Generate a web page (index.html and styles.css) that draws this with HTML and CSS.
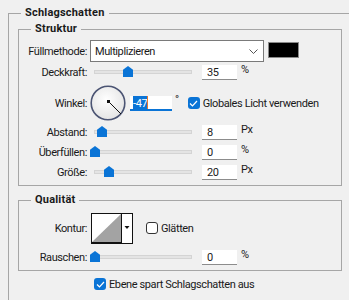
FILE: index.html
```html
<!DOCTYPE html>
<html lang="de">
<head>
    <meta charset="UTF-8">
    <title>Schlagschatten</title>
    <link rel="stylesheet" href="styles.css">
</head>
<body>
    <div class="panel">
        <div class="panel-title">Schlagschatten</div>

        <!-- Struktur -->
        <div class="group group-struct">
            <div class="group-title">Struktur</div>

            <div class="row row-blend">
                <span class="lbl">Füllmethode:</span>
                <div class="select">
                    <span>Multiplizieren</span>
                    <svg class="chevron" width="9" height="5" viewBox="0 0 9 5"><polyline points="0.5,0.5 4.5,4.5 8.5,0.5" fill="none" stroke="#555" stroke-width="1"/></svg>
                </div>
                <div class="swatch"></div>
            </div>

            <div class="row row-opacity">
                <span class="lbl">Deckkraft:</span>
                <div class="slider"><span class="thumb" style="left:28px"></span></div>
                <div class="field">35</div>
                <span class="unit">%</span>
            </div>

            <div class="row row-angle">
                <span class="lbl">Winkel:</span>
                <svg class="dial" width="36" height="36" viewBox="0 0 36 36">
                    <defs>
                        <radialGradient id="dialFill" cx="45%" cy="40%" r="60%">
                            <stop offset="0" stop-color="#ffffff"/>
                            <stop offset="1" stop-color="#e4e4e4"/>
                        </radialGradient>
                    </defs>
                    <circle cx="18" cy="18" r="16.8" fill="url(#dialFill)" stroke="#4b5473" stroke-width="1.6"/>
                    <line x1="18.5" y1="16.5" x2="31" y2="29" stroke="#111" stroke-width="1"/>
                    <rect x="17" y="15" width="3" height="3" fill="#111"/>
                </svg>
                <div class="field field-angle"><span class="sel">-47</span><span class="caret"></span></div>
                <span class="deg">°</span>
                <span class="check checked"><svg width="9" height="7" viewBox="0 0 9 7"><polyline points="1,3.5 3.5,6 8,1" fill="none" stroke="#fff" stroke-width="1.2"/></svg></span>
                <span class="check-text">Globales Licht verwenden</span>
            </div>

            <div class="row">
                <span class="lbl">Abstand:</span>
                <div class="slider"><span class="thumb" style="left:2px"></span></div>
                <div class="field">8</div>
                <span class="unit">Px</span>
            </div>

            <div class="row">
                <span class="lbl">Überfüllen:</span>
                <div class="slider"><span class="thumb" style="left:-5px"></span></div>
                <div class="field">0</div>
                <span class="unit">%</span>
            </div>

            <div class="row">
                <span class="lbl">Größe:</span>
                <div class="slider"><span class="thumb" style="left:9px"></span></div>
                <div class="field">20</div>
                <span class="unit">Px</span>
            </div>
        </div>

        <!-- Qualitaet -->
        <div class="group group-quality">
            <div class="group-title">Qualität</div>

            <div class="row row-contour">
                <span class="lbl">Kontur:</span>
                <svg class="contour" width="42" height="31" viewBox="0 0 42 31">
                    <rect x="0.5" y="0.5" width="41" height="30" fill="#fff" stroke="#111"/>
                    <polygon points="1,29 30,1 30,29" fill="#a3a3a3"/>
                    <line x1="0" y1="29.5" x2="31" y2="29.5" stroke="#111"/>
                    <line x1="30.5" y1="0" x2="30.5" y2="31" stroke="#111"/>
                    <polygon points="33.5,13 38.5,13 36,16" fill="#111"/>
                </svg>
                <span class="check check-smooth"></span>
                <span class="check-text">Glätten</span>
            </div>

            <div class="row row-noise">
                <span class="lbl">Rauschen:</span>
                <div class="slider"><span class="thumb" style="left:-5px"></span></div>
                <div class="field">0</div>
                <span class="unit">%</span>
            </div>
        </div>

        <div class="row row-knockout">
            <span class="check checked"><svg width="9" height="7" viewBox="0 0 9 7"><polyline points="1,3.5 3.5,6 8,1" fill="none" stroke="#fff" stroke-width="1.2"/></svg></span>
            <span class="check-text">Ebene spart Schlagschatten aus</span>
        </div>
    </div>
</body>
</html>
```

FILE: styles.css
```css
body {
    margin: 0;
    width: 349px;
    height: 300px;
    overflow: hidden;
    background-color: #f0f0f0;
    font-family: Roboto, "Noto Sans", sans-serif;
    font-size: 11px;
    letter-spacing: -0.4px;
    color: #1a1a1a;
}
.panel {
    margin: 13px 0 0 8px;
    width: 400px;
    padding: 0 0 20px 9px;
    border-top: 1px solid #a6a6a6;
    border-left: 1px solid #a6a6a6;
}
.panel-title, .group-title {
    font-weight: bold;
    letter-spacing: 0.2px;
    height: 16px;
    line-height: 16px;
    margin-top: -9px;
    padding: 0 4px;
    width: fit-content;
    background-color: #f0f0f0;
}
.panel-title {
    margin-left: 3px;
}
.group {
    width: 324px;
    box-sizing: border-box;
    border: 1px solid #a6a6a6;
    padding-bottom: 3px;
}
.group-title {
    margin-left: 12px;
}
.group-struct {
    margin-top: 8px;
}
.group-quality {
    margin-top: 14px;
}
.row {
    display: flex;
    align-items: center;
    height: 20px;
}
.lbl {
    flex: none;
    width: 68px;
    margin-right: 3px;
    text-align: right;
    white-space: nowrap;
}
.row-blend {
    height: 22px;
    margin-top: 3px;
}
.select {
    width: 174px;
    height: 22px;
    box-sizing: border-box;
    border: 1px solid #7a7a7a;
    background-color: #fff;
    display: flex;
    align-items: center;
    justify-content: space-between;
    padding: 0 5px 0 4px;
}
.swatch {
    align-self: flex-start;
    margin: 2px 0 0 4px;
    width: 31px;
    height: 16px;
    box-sizing: border-box;
    background-color: #000;
    border: 1px solid #8a8a8a;
}
.slider {
    position: relative;
    width: 98px;
    height: 4px;
    box-sizing: border-box;
    margin: 0 10px 0 4px;
    border: 1px solid #d4d4d4;
    background-color: #e4e4e4;
}
.thumb {
    position: absolute;
    top: -5px;
    width: 10px;
    height: 11px;
    background-color: #0a74d6;
    clip-path: polygon(50% 0, 100% 35%, 100% 100%, 0 100%, 0 35%);
}
.field {
    width: 35px;
    height: 15px;
    line-height: 15px;
    box-sizing: border-box;
    padding-left: 5px;
    background-color: #fff;
    border-bottom: 1px solid #8c8c8c;
}
.unit {
    align-self: flex-start;
    margin: 1px 0 0 4px;
    line-height: 14px;
}
.row-angle {
    height: 38px;
    margin-top: 2px;
}
.dial {
    flex: none;
}
.field-angle {
    width: 42px;
    margin-left: 4px;
    padding-left: 3px;
    border-bottom: 2px solid #0a74d6;
    display: flex;
}
.sel {
    background-color: #0a74d6;
    color: #fff;
}
.caret {
    width: 1px;
    background-color: #e8772e;
}
.deg {
    align-self: flex-start;
    margin: 9px 0 0 3px;
}
.check {
    flex: none;
    width: 12px;
    height: 12px;
    box-sizing: border-box;
    border-radius: 3px;
    display: flex;
    align-items: center;
    justify-content: center;
}
.checked {
    background-color: #0a74d6;
}
.check-text {
    margin-left: 3px;
    white-space: nowrap;
}
.row-angle .check {
    margin-left: 9px;
}
.row-contour {
    height: 32px;
    margin-top: 4px;
}
.contour {
    flex: none;
    margin-left: 1px;
}
.check-smooth {
    margin-left: 13px;
    border: 1px solid #333;
    background-color: #fff;
}
.row-noise {
    margin-top: 3px;
}
.row-knockout {
    margin: 3px 0 0 76px;
}
```
